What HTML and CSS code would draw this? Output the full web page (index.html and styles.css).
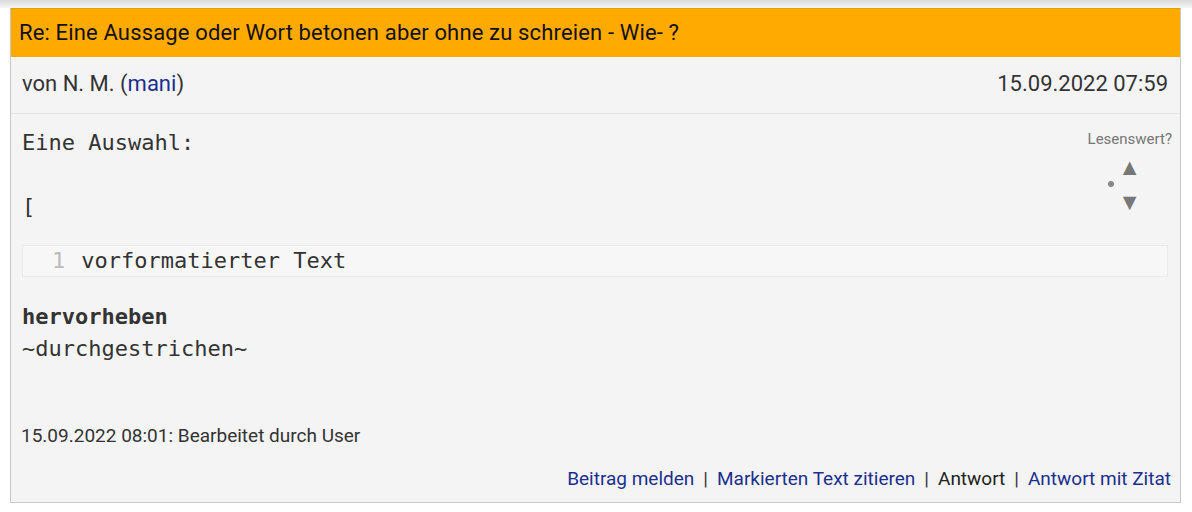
FILE: index.html
```html
<!DOCTYPE html>
<html lang="de">
<head>
<meta charset="UTF-8">
<meta name="viewport" content="width=device-width, initial-scale=1.0">
<title>Re: Eine Aussage oder Wort betonen aber ohne zu schreien - Wie- ?</title>
<link rel="stylesheet" href="styles.css">
</head>
<body>
<div class="shade"></div>
<div class="post">
  <div class="post-head">Re: Eine Aussage oder Wort betonen aber ohne zu schreien - Wie- ?</div>
  <div class="post-meta">
    <span>von N. M. (<a href="#">mani</a>)</span>
    <span>15.09.2022 07:59</span>
  </div>
  <div class="post-body">
    <div class="rating">
      <div class="rating-label">Lesenswert?</div>
      <div class="vote">
        <span class="dot"></span>
        <div class="arrows">
          <span class="up">&#9650;</span>
          <span class="down">&#9660;</span>
        </div>
      </div>
    </div>
    <div class="post-text">
      <p>Eine Auswahl:</p>
      <p class="gap">[</p>
      <div class="code"><span class="ln">1</span>vorformatierter Text</div>
      <p class="strong">hervorheben</p>
      <p>~durchgestrichen~</p>
    </div>
  </div>
  <div class="post-edit">15.09.2022 08:01: Bearbeitet durch User</div>
  <div class="post-links">
    <a href="#">Beitrag melden</a><span class="sep">|</span><a href="#">Markierten Text zitieren</a><span class="sep">|</span><span class="plain">Antwort</span><span class="sep">|</span><a href="#">Antwort mit Zitat</a>
  </div>
</div>
</body>
</html>
```

FILE: styles.css
```css
body {
  margin:0;
  background:#fff;
  color:#333;
  font-family:Roboto, 'Liberation Sans', sans-serif;
}
a {color:#1b2f8f; text-decoration:none;}
.shade {height:8px; background:linear-gradient(#d9d9d9, #f6f6f6);}
.post {
  width:1169px;
  margin:0 0 0 10px;
  border:1px solid #c8c8c8;
  border-top-color:#e3a000;
  background:#f4f4f4;
}
.post-head {
  background:#ffaa00;
  color:#111;
  font-size:22px;
  letter-spacing:0.15px;
  height:48px;
  line-height:48px;
  padding:0 8px;
}
.post-meta {
  display:flex;
  justify-content:space-between;
  font-size:22px;
  height:56px;
  line-height:54px;
  padding:0 12px 0 11px;
  border-bottom:1px solid #e6e6e6;
}
.post-body {padding:13px 12px 0 11px;}
.post-text {
  font-family:'DejaVu Sans Mono', monospace;
  font-size:22px;
  line-height:32px;
}
.post-text p {margin:0;}
.post-text .gap {margin:32px 0 22px;}
.post-text .strong {font-weight:bold; margin-top:24px;}
.code {
  height:30px;
  line-height:30px;
  background:#f7f7f7;
  border:1px solid #ebebeb;
  padding-left:29px;
}
.code .ln {color:#bbb; margin-right:16px;}
.rating {float:right; width:110px; margin-right:-4px; text-align:right; color:#777;}
.rating-label {font-size:15px; line-height:18px; margin-top:3px;}
.vote {display:flex; justify-content:flex-end; align-items:center; margin-top:11px; padding-right:31px;}
.dot {width:6px; height:6px; border-radius:50%; background:#888; margin:0 4px 4px 0;}
.arrows {display:flex; flex-direction:column; font-size:23px; line-height:18px; gap:17px;}
.post-edit {font-size:19px; padding:58px 10px 0; line-height:26px;}
.post-links {
  text-align:right;
  font-size:19px;
  line-height:26px;
  padding:17px 9px 10px;
}
.post-links .sep {margin:0 9px; color:#333;}
.post-links .plain {color:#222;}
```
